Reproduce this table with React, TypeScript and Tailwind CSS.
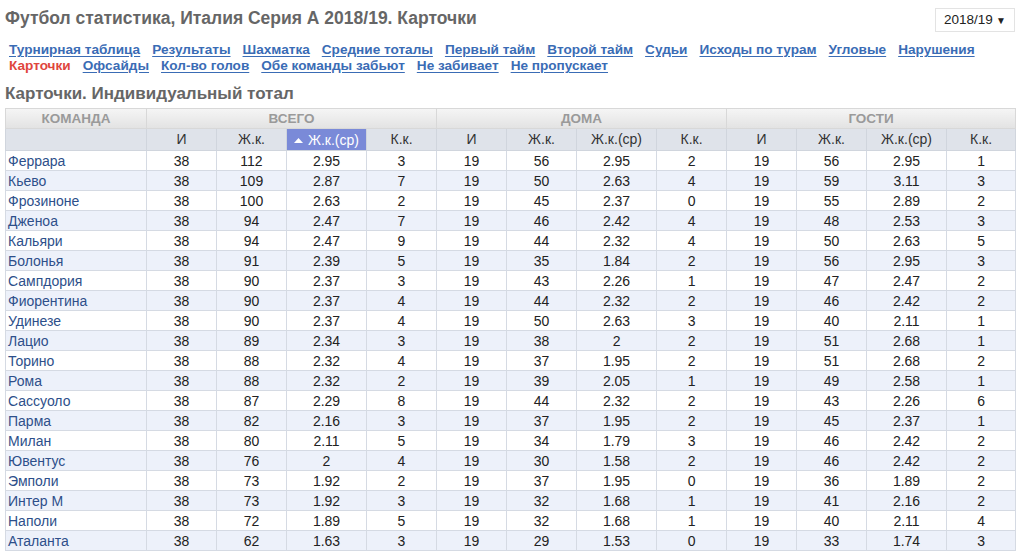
import React from "react";

const rows: [string, number[]][] = [
  ["Феррара", [38, 112, 2.95, 3, 19, 56, 2.95, 2, 19, 56, 2.95, 1]],
  ["Кьево", [38, 109, 2.87, 7, 19, 50, 2.63, 4, 19, 59, 3.11, 3]],
  ["Фрозиноне", [38, 100, 2.63, 2, 19, 45, 2.37, 0, 19, 55, 2.89, 2]],
  ["Дженоа", [38, 94, 2.47, 7, 19, 46, 2.42, 4, 19, 48, 2.53, 3]],
  ["Кальяри", [38, 94, 2.47, 9, 19, 44, 2.32, 4, 19, 50, 2.63, 5]],
  ["Болонья", [38, 91, 2.39, 5, 19, 35, 1.84, 2, 19, 56, 2.95, 3]],
  ["Сампдория", [38, 90, 2.37, 3, 19, 43, 2.26, 1, 19, 47, 2.47, 2]],
  ["Фиорентина", [38, 90, 2.37, 4, 19, 44, 2.32, 2, 19, 46, 2.42, 2]],
  ["Удинезе", [38, 90, 2.37, 4, 19, 50, 2.63, 3, 19, 40, 2.11, 1]],
  ["Лацио", [38, 89, 2.34, 3, 19, 38, 2, 2, 19, 51, 2.68, 1]],
  ["Торино", [38, 88, 2.32, 4, 19, 37, 1.95, 2, 19, 51, 2.68, 2]],
  ["Рома", [38, 88, 2.32, 2, 19, 39, 2.05, 1, 19, 49, 2.58, 1]],
  ["Сассуоло", [38, 87, 2.29, 8, 19, 44, 2.32, 2, 19, 43, 2.26, 6]],
  ["Парма", [38, 82, 2.16, 3, 19, 37, 1.95, 2, 19, 45, 2.37, 1]],
  ["Милан", [38, 80, 2.11, 5, 19, 34, 1.79, 3, 19, 46, 2.42, 2]],
  ["Ювентус", [38, 76, 2, 4, 19, 30, 1.58, 2, 19, 46, 2.42, 2]],
  ["Эмполи", [38, 73, 1.92, 2, 19, 37, 1.95, 0, 19, 36, 1.89, 2]],
  ["Интер М", [38, 73, 1.92, 3, 19, 32, 1.68, 1, 19, 41, 2.16, 2]],
  ["Наполи", [38, 72, 1.89, 5, 19, 32, 1.68, 1, 19, 40, 2.11, 4]],
  ["Аталанта", [38, 62, 1.63, 3, 19, 29, 1.53, 0, 19, 33, 1.74, 3]],
];

const nav1 = [
  "Турнирная таблица",
  "Результаты",
  "Шахматка",
  "Средние тоталы",
  "Первый тайм",
  "Второй тайм",
  "Судьи",
  "Исходы по турам",
  "Угловые",
  "Нарушения",
];
const nav2 = ["Офсайды", "Кол-во голов", "Обе команды забьют", "Не забивает", "Не пропускает"];

const widths = [141, 70, 70, 80, 70, 70, 70, 80, 70, 70, 70, 80, 69];

export default function App() {
  const sub = ["И", "Ж.к.", "Ж.к.(ср)", "К.к."];
  return (
    <div
      className="w-[1020px] h-[557px] bg-white text-[#222] overflow-hidden"
      style={{ fontFamily: '"Liberation Sans", Arial, sans-serif' }}
    >
      <div className="flex items-start justify-between pl-[5px] pr-[5px] pt-[7px]">
        <h1 className="text-[17.5px] font-bold text-[#666] leading-[22px]">
          Футбол статистика, Италия Серия А 2018/19. Карточки
        </h1>
        <div className="mt-[1px] w-[80px] h-[24px] border border-[#e3e3e3] flex items-center justify-between pl-[8px] pr-[8px] text-[13.5px] text-[#222]">
          <span>2018/19</span>
          <span className="text-[10px]">▼</span>
        </div>
      </div>
      <div className="pl-[9px] mt-[10px] text-[13.6px] font-bold leading-[16px]">
        <div className="flex gap-x-[12px]">
          {nav1.map((n) => (
            <span key={n} className="text-[#3a6cb5] underline underline-offset-[2px]">
              {n}
            </span>
          ))}
        </div>
        <div className="flex gap-x-[12px]">
          <span className="text-[#e0463d]">Карточки</span>
          {nav2.map((n) => (
            <span key={n} className="text-[#3a6cb5] underline underline-offset-[2px]">
              {n}
            </span>
          ))}
        </div>
      </div>
      <h2 className="pl-[5px] mt-[11px] text-[17px] font-bold text-[#666] leading-[18px]">
        Карточки. Индивидуальный тотал
      </h2>
      <table className="ml-[5px] mt-[5px] border-collapse table-fixed w-[1010px] text-[14px]">
        <colgroup>
          {widths.map((w, i) => (
            <col key={i} style={{ width: w }} />
          ))}
        </colgroup>
        <thead>
          <tr className="h-[20px] bg-gradient-to-b from-[#f5f5f5] to-[#e2e2e2] text-[#9a9a9a] text-[13.5px] font-bold leading-[18px]">
            <th className="border border-[#d8d8d8] font-bold">КОМАНДА</th>
            <th colSpan={4} className="border border-[#d8d8d8] font-bold">ВСЕГО</th>
            <th colSpan={4} className="border border-[#d8d8d8] font-bold">ДОМА</th>
            <th colSpan={4} className="border border-[#d8d8d8] font-bold">ГОСТИ</th>
          </tr>
          <tr className="h-[21px] bg-[#dfe3ea] text-[#333] leading-[19px]">
            <th className="border border-[#d0d5dd] font-normal"></th>
            {[0, 1, 2].map((g) =>
              sub.map((s, i) => {
                const active = g === 0 && i === 2;
                return (
                  <th
                    key={g + "-" + i}
                    className={
                      active
                        ? "border border-[#d0d5dd] font-normal bg-[#7a8ad8] text-white"
                        : "border border-[#d0d5dd] font-normal"
                    }
                  >
                    {active ? (
                      <span className="inline-flex items-center gap-[5px]">
                        <svg width="9" height="5" viewBox="0 0 9 5">
                          <path d="M0 5 L4.5 0 L9 5 Z" fill="white" />
                        </svg>
                        {s}
                      </span>
                    ) : (
                      s
                    )}
                  </th>
                );
              })
            )}
          </tr>
        </thead>
        <tbody>
          {rows.map(([name, vals], r) => (
            <tr key={name} className={r % 2 === 0 ? "h-[20px] bg-white" : "h-[20px] bg-[#edf1fa]"}>
              <td className="border border-[#d5dae3] pl-[2px] text-[#2d4f8a] leading-[18px]">{name}</td>
              {vals.map((v, i) => (
                <td key={i} className="border border-[#d5dae3] text-center text-[#222] leading-[18px]">
                  {v}
                </td>
              ))}
            </tr>
          ))}
        </tbody>
      </table>
    </div>
  );
}
